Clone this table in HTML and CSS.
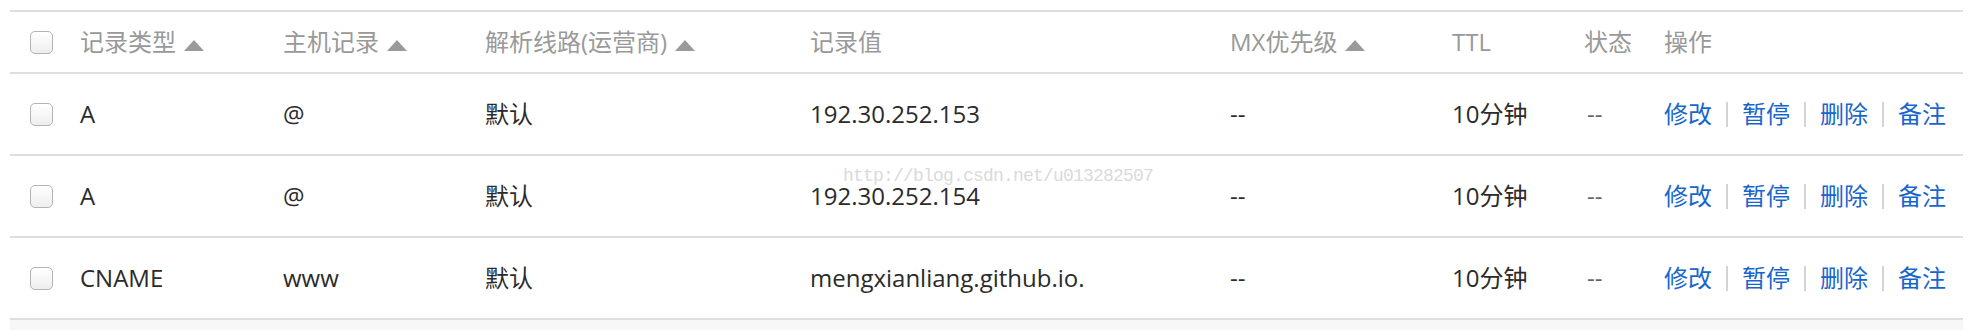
FILE: index.html
```html
<!DOCTYPE html>
<html lang="zh-CN">
<head>
<meta charset="utf-8">
<title>解析记录</title>
<link rel="stylesheet" href="styles.css">
</head>
<body>
<div class="page">
  <div class="records">
    <div class="row head">
      <div class="cell check"><span class="box"></span></div>
      <div class="cell">记录类型<i class="sort"></i></div>
      <div class="cell">主机记录<i class="sort"></i></div>
      <div class="cell">解析线路(运营商)<i class="sort"></i></div>
      <div class="cell">记录值</div>
      <div class="cell">MX优先级<i class="sort"></i></div>
      <div class="cell">TTL</div>
      <div class="cell">状态</div>
      <div class="cell">操作</div>
    </div>
    <div class="row item">
      <div class="cell check"><span class="box"></span></div>
      <div class="cell">A</div>
      <div class="cell">@</div>
      <div class="cell">默认</div>
      <div class="cell">192.30.252.153</div>
      <div class="cell">--</div>
      <div class="cell">10分钟</div>
      <div class="cell status">--</div>
      <div class="cell ops"><a href="#">修改</a><span class="sep"></span><a href="#">暂停</a><span class="sep"></span><a href="#">删除</a><span class="sep"></span><a href="#">备注</a></div>
    </div>
    <div class="row item">
      <div class="cell check"><span class="box"></span></div>
      <div class="cell">A</div>
      <div class="cell">@</div>
      <div class="cell">默认</div>
      <div class="cell">192.30.252.154</div>
      <div class="cell">--</div>
      <div class="cell">10分钟</div>
      <div class="cell status">--</div>
      <div class="cell ops"><a href="#">修改</a><span class="sep"></span><a href="#">暂停</a><span class="sep"></span><a href="#">删除</a><span class="sep"></span><a href="#">备注</a></div>
    </div>
    <div class="row item">
      <div class="cell check"><span class="box"></span></div>
      <div class="cell">CNAME</div>
      <div class="cell">www</div>
      <div class="cell">默认</div>
      <div class="cell">mengxianliang.github.io.</div>
      <div class="cell">--</div>
      <div class="cell">10分钟</div>
      <div class="cell status">--</div>
      <div class="cell ops"><a href="#">修改</a><span class="sep"></span><a href="#">暂停</a><span class="sep"></span><a href="#">删除</a><span class="sep"></span><a href="#">备注</a></div>
    </div>
  </div>
  <div class="footer"></div>
  <div class="watermark">http://blog.csdn.net/u013282507</div>
</div>
</body>
</html>
```
FILE: styles.css
```css
html, body {
  margin: 0;
  padding: 0;
  background: #fff;
}

.page {
  position: relative;
  margin: 10px 17px 0 10px;
  font-family: "Open Sans", "Noto Sans CJK SC", sans-serif;
  font-size: 24px;
  color: #2b2b2b;
}

.records {
  border-top: 2px solid #dedede;
}

.row {
  display: grid;
  grid-template-columns: 70px 203px 202px 325px 420px 222px 132px 80px 1fr;
  align-items: center;
  border-bottom: 2px solid #dedede;
}

.head {
  height: 60px;
  color: #999;
}

.item {
  height: 80px;
}

.cell {
  display: flex;
  align-items: center;
  line-height: 1;
  white-space: nowrap;
}

.check {
  padding-left: 20px;
}

.box {
  display: block;
  width: 23px;
  height: 23px;
  box-sizing: border-box;
  border: 1px solid #b3b3b3;
  border-radius: 5px;
  background: linear-gradient(#ffffff, #eeeeee);
}

.sort {
  display: block;
  width: 0;
  height: 0;
  border-left: 10px solid transparent;
  border-right: 10px solid transparent;
  border-bottom: 11px solid #9a9a9a;
  margin-left: 8px;
  margin-top: 7px;
}

.status {
  color: #666;
  padding-left: 3px;
}

.ops a {
  color: #1866cc;
  text-decoration: none;
}

.sep {
  display: block;
  width: 2px;
  height: 25px;
  margin: 0 14px;
  background: #d4d4d4;
}

.footer {
  height: 10px;
  background: #f7f7f7;
}

.watermark {
  position: absolute;
  left: 833px;
  top: 158px;
  font-family: "Liberation Mono", monospace;
  font-size: 18px;
  line-height: 16px;
  letter-spacing: -0.8px;
  color: #dadada;
  pointer-events: none;
}
```
